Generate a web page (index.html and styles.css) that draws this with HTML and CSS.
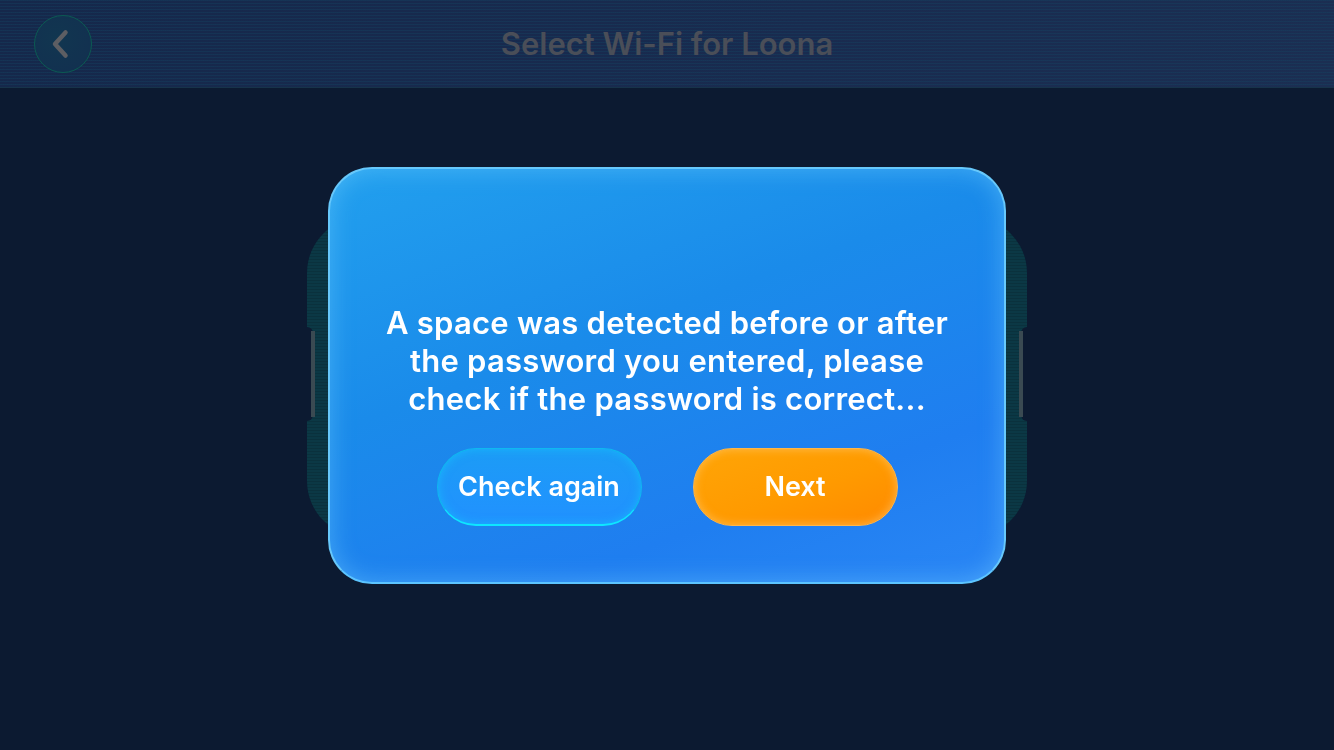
FILE: index.html
```html
<!DOCTYPE html>
<html lang="en">
<head>
  <meta charset="UTF-8">
  <meta name="viewport" content="width=device-width, initial-scale=1.0">
  <title>Select Wi-Fi for Loona</title>
  <link rel="stylesheet" href="styles.css">
</head>
<body>

<div class="header">
  <button class="back-btn" aria-label="Back">
    <svg width="22" height="30" viewBox="0 0 22 30">
      <path d="M15.5 3.5 L5 15 L15.5 26.5" fill="none" stroke="#5d5e63" stroke-width="4.5" stroke-linecap="round" stroke-linejoin="round"/>
    </svg>
  </button>
  <div class="title">Select Wi-Fi for Loona</div>
  <div class="header-spacer"></div>
</div>

<div class="overlay">
  <div class="dialog-wrap">
    <div class="dialog-back">
      <div class="notch notch-left"></div>
      <div class="notch notch-right"></div>
    </div>
    <div class="dialog">
      <p class="message">A space was detected before or after<br>the password you entered, please<br>check if the password is correct...</p>
      <div class="actions">
        <button class="btn btn-blue">Check again</button>
        <button class="btn btn-orange">Next</button>
      </div>
    </div>
  </div>
</div>

</body>
</html>
```

FILE: styles.css
```css
html, body {
  margin: 0;
  height: 100%;
}

body {
  background: #0c1a31;
  font-family: Inter, "Noto Sans", sans-serif;
  overflow: hidden;
}

.header {
  height: 87px;
  display: flex;
  align-items: center;
  justify-content: space-between;
  padding: 0 34px;
  background:
    repeating-linear-gradient(to bottom, rgba(20, 70, 100, 0.35) 0 1px, transparent 1px 3px),
    linear-gradient(100deg, #15284b 0%, #192b4f 60%, #1b2e52 100%);
  border-bottom: 1px solid #17334a;
}

.back-btn {
  width: 58px;
  height: 58px;
  border-radius: 50%;
  border: 1px solid #0b5a52;
  background: radial-gradient(circle at 40% 40%, #113650 0%, #123150 70%, #0f3048 100%);
  display: flex;
  align-items: center;
  justify-content: center;
  padding: 0 4px 0 0;
}

.title {
  font-size: 31px;
  font-weight: 600;
  color: #4a4e58;
}

.header-spacer {
  width: 58px;
}

.overlay {
  position: fixed;
  inset: 0;
  display: flex;
  align-items: center;
  justify-content: center;
}

.dialog-wrap {
  position: relative;
  width: 720px;
  display: flex;
  justify-content: center;
}

.dialog-back {
  position: absolute;
  left: 0;
  right: 0;
  top: 50px;
  height: 320px;
  border-radius: 56px;
  background:
    repeating-linear-gradient(to bottom, rgba(0, 0, 0, 0.12) 0 1px, transparent 1px 3px),
    #0b3845;
}

.notch {
  position: absolute;
  top: 110px;
  width: 6px;
  height: 94px;
  background: #0c1a31;
}

.notch::after {
  content: "";
  position: absolute;
  top: 4px;
  bottom: 4px;
  width: 4px;
  background: #3a4a52;
}

.notch-left {
  left: 0;
  border-radius: 0 6px 6px 0;
}

.notch-left::after {
  left: 4px;
}

.notch-right {
  right: 0;
  border-radius: 6px 0 0 6px;
}

.notch-right::after {
  right: 4px;
}

.dialog {
  position: relative;
  width: 678px;
  height: 417px;
  box-sizing: border-box;
  border-radius: 44px;
  border: 2px solid #67c8fb;
  border-bottom-color: #5cc4ff;
  background: linear-gradient(160deg, #22a0ee 0%, #1a8bea 40%, #1f7ef0 75%, #2a86f5 100%);
  box-shadow: inset 0 0 24px rgba(120, 210, 255, 0.45);
  padding-top: 135px;
  display: flex;
  flex-direction: column;
  align-items: center;
}

.message {
  margin: 0;
  text-align: center;
  color: #fff;
  font-size: 31px;
  font-weight: 600;
  line-height: 38px;
  letter-spacing: 0.25px;
  white-space: nowrap;
}

.actions {
  display: flex;
  gap: 51px;
  margin-top: 30px;
}

.btn {
  width: 205px;
  height: 78px;
  border-radius: 39px;
  color: #fff;
  font-family: Inter, "Noto Sans", sans-serif;
  font-size: 27px;
  font-weight: 600;
  padding: 0;
}

.btn-blue {
  border: 1px solid #0fb8f0;
  border-bottom: 2px solid #0ee6ff;
  background: linear-gradient(180deg, #1c9cf6 0%, #2191ff 100%);
  box-shadow: inset 0 0 10px rgba(20, 200, 255, 0.6);
}

.btn-orange {
  border: 1px solid #ffb64a;
  background: linear-gradient(160deg, #ffa507 0%, #ff9a00 55%, #ff8a00 100%);
  box-shadow: inset 0 0 10px rgba(255, 200, 110, 0.7);
}
```
